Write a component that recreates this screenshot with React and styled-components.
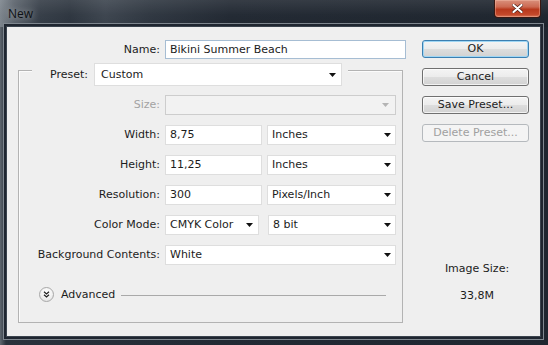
import React from 'react';
import styled, { createGlobalStyle } from 'styled-components';

const Global = createGlobalStyle`
  html, body { margin: 0; padding: 0; background: #1e252e; }
  body { width: 548px; height: 345px; overflow: hidden; }
  #root { width: 548px; height: 345px; }
  * { box-sizing: border-box; }
`;

const Window = styled.div`
  width: 548px;
  height: 345px;
  display: flex;
  flex-direction: column;
  overflow: hidden;
  background: linear-gradient(to right, #5f676f 0px, #2a323c 6px, #222a34 40%, #1f2630 100%);
  font-family: "DejaVu Sans", sans-serif;
  font-size: 11px;
  color: #1c1c1c;
`;

const TitleBar = styled.div`
  height: 27px;
  flex: none;
  display: flex;
  align-items: flex-start;
  justify-content: space-between;
  padding: 0 7px 0 8px;
  background:
    linear-gradient(to bottom, rgba(255,255,255,0.10) 0%, rgba(255,255,255,0.02) 55%, rgba(0,0,0,0) 100%),
    linear-gradient(to right, #7c848c 0px, #59616a 14px, #343c46 40px, #2c343e 70px, #3b434d 105px, #2d353f 150px, #202731 230px, #1c232c 100%);
`;

const Title = styled.span`
  font-family: "Open Sans", "Noto Sans", sans-serif;
  font-size: 12px;
  color: #0e1114;
  line-height: 14px;
  margin-top: 7px;
  text-shadow: 0 0 6px rgba(255,255,255,0.5);
`;

const CloseButton = styled.div`
  width: 47px;
  height: 18px;
  display: flex;
  align-items: center;
  justify-content: center;
  border: 1px solid #3a1812;
  border-top: none;
  border-radius: 0 0 4px 4px;
  background: linear-gradient(to bottom, #d9907c 0%, #cc6a52 40%, #b8391d 55%, #c4482a 85%, #d9775a 100%);
  box-shadow: inset 0 0 0 1px rgba(255,210,190,0.35);
`;

const Client = styled.div`
  flex: 1;
  margin: 0 8px 9px 7px;
  background: #efefef;
  display: grid;
  grid-template-columns: 388px 107px;
  column-gap: 16px;
  align-items: start;
  padding: 13px 11px 0 11px;
  box-shadow: 0 0 0 1px #3a434d, 0 0 0 3px #1f2630, 0 0 0 4px #7f878f;
`;

const LeftCol = styled.div`
  display: flex;
  flex-direction: column;
`;

const NameRow = styled.div`
  display: grid;
  grid-template-columns: 142px 1fr;
  column-gap: 5px;
  align-items: center;
  height: 19px;
`;

const Label = styled.span`
  text-align: right;
  white-space: nowrap;
  color: ${p => (p.$disabled ? '#a3a3a3' : '#1c1c1c')};
  line-height: 14px;
`;

const TextBox = styled.div`
  height: ${p => p.$h || 20}px;
  width: ${p => (p.$w ? `${p.$w}px` : 'auto')};
  background: #ffffff;
  border: 1px solid ${p => (p.$focus ? '#a6bdd3' : '#dedede')};
  padding: 0 4px;
  display: flex;
  align-items: center;
  white-space: nowrap;
  line-height: 14px;
`;

const Group = styled.div`
  margin-top: 11px;
  width: 385px;
  border: 1px solid #b3b3b3;
  box-shadow: inset 1px 1px 0 #fbfbfb;
  display: flex;
  flex-direction: column;
  padding-bottom: 20px;
`;

const GroupHeader = styled.div`
  align-self: flex-start;
  margin: -8px 0 0 13px;
  padding: 0 6px 0 18px;
  background: #efefef;
  display: flex;
  align-items: center;
  gap: 6px;
  height: 23px;
`;

const Rows = styled.div`
  margin-top: 9px;
  display: flex;
  flex-direction: column;
  gap: 10px;
`;

const Row = styled.div`
  display: grid;
  grid-template-columns: 141px 231px;
  column-gap: 5px;
  align-items: center;
  height: 20px;
`;

const Pair = styled.div`
  display: flex;
  gap: ${p => p.$gap || 5}px;
`;

const Select = styled.div`
  height: ${p => p.$h || 20}px;
  width: ${p => (p.$w ? `${p.$w}px` : 'auto')};
  flex: ${p => (p.$w ? 'none' : '1')};
  background: ${p => (p.$disabled ? '#f2f2f2' : '#ffffff')};
  border: 1px solid ${p => (p.$disabled ? '#cdcdcd' : '#dedede')};
  padding: 0 ${p => p.$pr || 4}px 0 ${p => p.$pl || 4}px;
  display: flex;
  align-items: center;
  justify-content: space-between;
  white-space: nowrap;
  line-height: 14px;
`;

const Arrow = ({ disabled }) => (
  <svg width="7" height="4" viewBox="0 0 7 4">
    <polygon points="0,0 7,0 3.5,4" fill={disabled ? '#b4b4b4' : '#111111'} />
  </svg>
);

const AdvancedRow = styled.div`
  margin-top: 22px;
  padding-left: 20px;
  height: 15px;
  display: flex;
  align-items: center;
`;

const AdvIcon = styled.div`
  width: 15px;
  height: 15px;
  flex: none;
  border-radius: 50%;
  border: 1px solid #a8a8a8;
  background: radial-gradient(circle at 50% 35%, #ffffff 0%, #f3f3f3 50%, #d9d9d9 100%);
  display: flex;
  align-items: center;
  justify-content: center;
`;

const AdvText = styled.span`
  margin-left: 7px;
  line-height: 14px;
`;

const Rule = styled.div`
  flex: 1;
  height: 1px;
  background: #a9a9a9;
  margin: 1px 16px 0 6px;
`;

const RightCol = styled.div`
  display: flex;
  flex-direction: column;
  gap: 10px;
`;

const Button = styled.div`
  height: 18px;
  border-radius: 3px;
  display: flex;
  align-items: center;
  justify-content: center;
  line-height: 14px;
  white-space: nowrap;
  color: ${p => (p.$disabled ? '#a0a0a0' : '#1c1c1c')};
  border: 1px solid ${p => (p.$default ? '#3c7fb1' : p.$disabled ? '#b5b9bd' : '#707070')};
  background: ${p =>
    p.$disabled
      ? '#f4f4f4'
      : 'linear-gradient(to bottom, #f4f4f4 0%, #ececec 48%, #dddddd 52%, #d2d2d2 100%)'};
  box-shadow: ${p => (p.$default ? 'inset 0 0 0 1px #9fd6f4' : p.$disabled ? 'none' : 'inset 0 0 0 1px rgba(255,255,255,0.7)')};
`;

const Info = styled.div`
  margin-top: 110px;
  display: flex;
  flex-direction: column;
  align-items: center;
  gap: 13px;
  padding-left: 3px;
  line-height: 14px;
`;

export default function App() {
  return (
    <>
      <Global />
      <Window>
        <TitleBar>
          <Title>New</Title>
          <CloseButton>
            <svg width="11" height="9" viewBox="0 0 11 9">
              <path d="M1.5 1 L9.5 8 M9.5 1 L1.5 8" stroke="#4a1a10" strokeWidth="3.4" strokeLinecap="round" />
              <path d="M1.5 1 L9.5 8 M9.5 1 L1.5 8" stroke="#ffffff" strokeWidth="2.2" strokeLinecap="round" />
            </svg>
          </CloseButton>
        </TitleBar>
        <Client>
          <LeftCol>
            <NameRow>
              <Label>Name:</Label>
              <TextBox $h={19} $focus>Bikini Summer Beach</TextBox>
            </NameRow>
            <Group>
              <GroupHeader>
                <Label>Preset:</Label>
                <Select $w={248} $h={23} $pl={6} $pr={5}>
                  Custom
                  <Arrow />
                </Select>
              </GroupHeader>
              <Rows>
                <Row>
                  <Label $disabled>Size:</Label>
                  <Select $disabled $pr={6}>
                    <span />
                    <Arrow disabled />
                  </Select>
                </Row>
                <Row>
                  <Label>Width:</Label>
                  <Pair>
                    <TextBox $w={97}>8,75</TextBox>
                    <Select $pr={4}>
                      Inches
                      <Arrow />
                    </Select>
                  </Pair>
                </Row>
                <Row>
                  <Label>Height:</Label>
                  <Pair>
                    <TextBox $w={97}>11,25</TextBox>
                    <Select $pr={4}>
                      Inches
                      <Arrow />
                    </Select>
                  </Pair>
                </Row>
                <Row>
                  <Label>Resolution:</Label>
                  <Pair>
                    <TextBox $w={97}>300</TextBox>
                    <Select $pr={4}>
                      Pixels/Inch
                      <Arrow />
                    </Select>
                  </Pair>
                </Row>
                <Row>
                  <Label>Color Mode:</Label>
                  <Pair $gap={9}>
                    <Select $w={94} $pr={5}>
                      CMYK Color
                      <Arrow />
                    </Select>
                    <Select $pr={4}>
                      8 bit
                      <Arrow />
                    </Select>
                  </Pair>
                </Row>
                <Row>
                  <Label>Background Contents:</Label>
                  <Select $pr={4}>
                    White
                    <Arrow />
                  </Select>
                </Row>
              </Rows>
              <AdvancedRow>
                <AdvIcon>
                  <svg width="7" height="7" viewBox="0 0 7 7">
                    <path d="M1 0.8 L3.5 3 L6 0.8 M1 3.8 L3.5 6 L6 3.8" stroke="#222" strokeWidth="1.3" fill="none" />
                  </svg>
                </AdvIcon>
                <AdvText>Advanced</AdvText>
                <Rule />
              </AdvancedRow>
            </Group>
          </LeftCol>
          <RightCol>
            <Button $default>OK</Button>
            <Button>Cancel</Button>
            <Button>Save Preset...</Button>
            <Button $disabled>Delete Preset...</Button>
            <Info>
              <span>Image Size:</span>
              <span>33,8M</span>
            </Info>
          </RightCol>
        </Client>
      </Window>
    </>
  );
}
